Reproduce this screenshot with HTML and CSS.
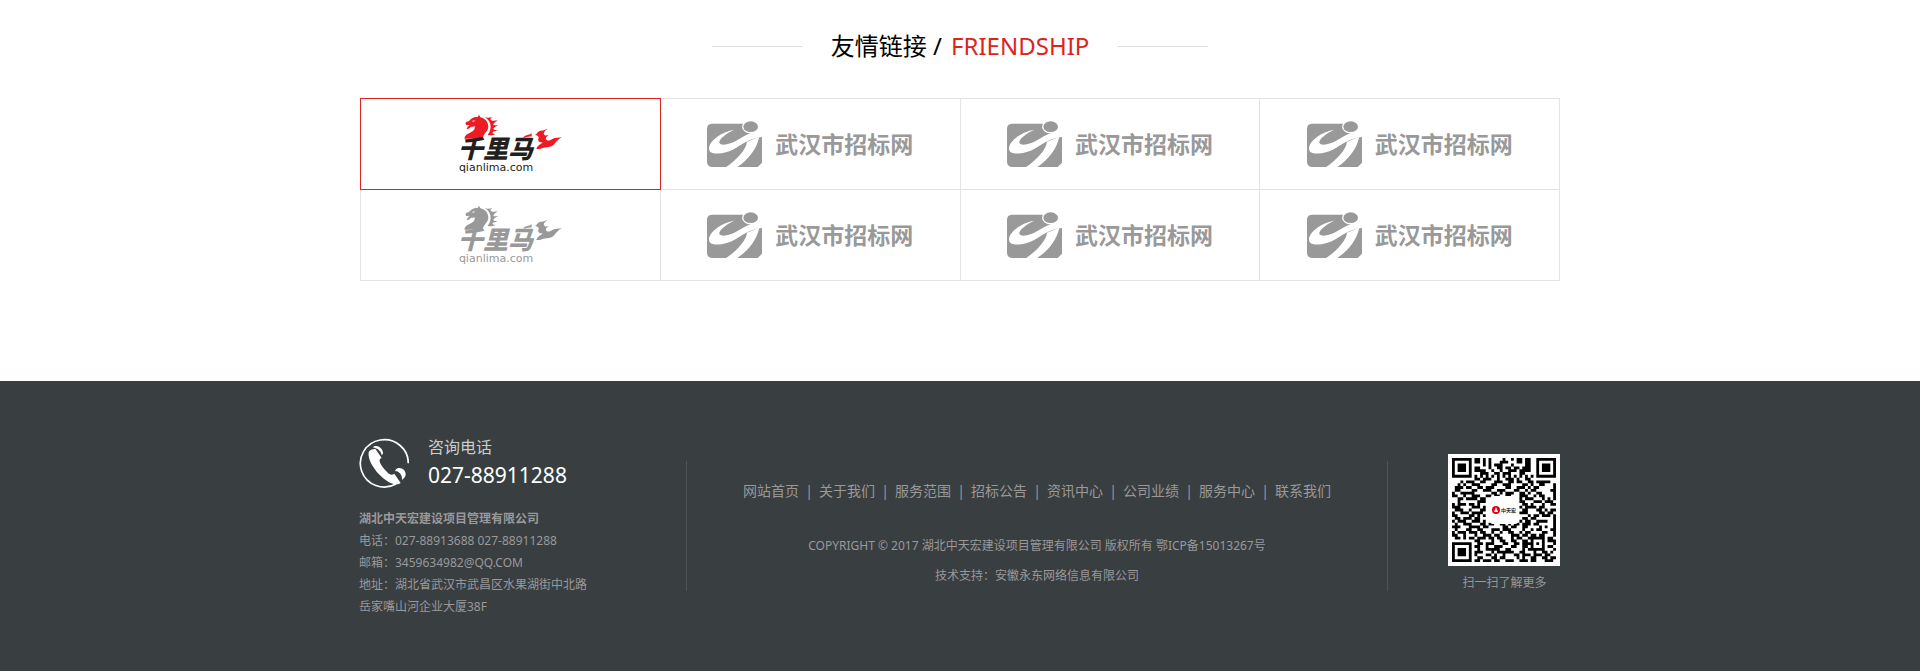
FILE: index.html
```html
<!DOCTYPE html>
<html lang="zh-CN">
<head>
    <meta charset="UTF-8">
    <meta name="viewport" content="width=device-width, initial-scale=1.0">
    <title>湖北中天宏建设项目管理有限公司</title>
    <link rel="stylesheet" href="styles.css">
</head>
<body>
    <!-- shared logo shapes -->
    <svg class="sprite" aria-hidden="true">
        <symbol id="horse" viewBox="325 75 315 180">
            <path d="M344 149C345 139 352 135 361 131C371 126 377 121 375 111C370 115 365 111 362 115C360 119 356 118 355 121L351 119L354 113L360 109L350 108L347 104L350 98L357 97L364 90C370 85 378 84 384 84L388 77L392 85C407 88 416 99 416 114C415 129 400 134 399 149Z"/>
            <path d="M405 84C412 88 419 86 428 85C423 89 421 90 423 92C430 98 437 94 444 95C436 98 431 103 431 108C436 110 441 108 446 109C436 113 431 117 431 121C436 124 440 122 444 123C438 127 430 127 428 131C430 134 434 134 438 134C431 139 421 140 414 138C422 128 425 114 421 103C418 94 413 89 405 84Z"/>
            <path d="M521 147C525 135 537 141 546 132C547 138 543 139 549 142C539 143 531 143 521 147Z"/>
            <path d="M553 137C563 138 561 127 573 125C584 124 587 121 594 119C584 127 579 132 585 138C588 141 592 139 597 139C588 144 586 149 591 153C597 157 603 153 608 150C617 145 627 147 637 145C626 150 621 157 615 164C604 178 585 172 573 179C569 180 566 180 560 180C563 169 575 165 580 160C567 162 563 153 567 147C569 142 563 138 553 137Z"/>
            <path class="horse-eye" d="M366 97L375 93L373 98Z"/>
        </symbol>
        <symbol id="runner" viewBox="54 32 165 138">
            <path d="M54 54Q55 41 68 40H163C164 60 178 70 195 70L219 78V157L206 170H68Q55 168 54 155Z"/>
            <path class="cut" d="M136 58C101 63 59 91 60 116C62 139 112 130 142 112C165 98 188 82 222 80V70L188 68C166 73 149 91 124 99C108 105 88 105 91 94C94 82 116 67 136 58Z"/>
            <path class="cut" d="M174 94C172 117 143 149 110 171H143C177 149 203 117 211 79Z"/>
            <ellipse class="head" cx="185" cy="49" rx="24" ry="18"/>
        </symbol>
    </svg>

    <section class="friendship">
        <h2 class="title">
            <span>友情链接 / <em>FRIENDSHIP</em></span>
        </h2>
        <ul class="links">
            <li class="active">
                <a href="#" class="qlm"><svg class="qlm-art"><use href="#horse"/></svg><b>千里马</b><small>qianlima.com</small></a>
            </li>
            <li><a href="#" class="whzb"><svg><use href="#runner"/></svg>武汉市招标网</a></li>
            <li><a href="#" class="whzb"><svg><use href="#runner"/></svg>武汉市招标网</a></li>
            <li><a href="#" class="whzb"><svg><use href="#runner"/></svg>武汉市招标网</a></li>
            <li>
                <a href="#" class="qlm"><svg class="qlm-art"><use href="#horse"/></svg><b>千里马</b><small>qianlima.com</small></a>
            </li>
            <li><a href="#" class="whzb"><svg><use href="#runner"/></svg>武汉市招标网</a></li>
            <li><a href="#" class="whzb"><svg><use href="#runner"/></svg>武汉市招标网</a></li>
            <li><a href="#" class="whzb"><svg><use href="#runner"/></svg>武汉市招标网</a></li>
        </ul>
    </section>

    <footer class="footer">
        <div class="footer-inner">
            <div class="contact">
                <div class="hotline">
                    <svg class="phone" viewBox="28 42 150 150">
                        <path class="ring" d="M176 118A72 71 0 1 0 139 180"/>
                        <path d="M57 84C54 105 69 130 88 151C105 168 122 180 138 181C144 182 149 180 153 177L134 149C126 155 120 152 112 144C103 134 93 123 90 113C89 107 91 104 96 102L77 74C67 75 60 78 57 84Z"/>
                        <path d="M69 70C75 64 86 66 92 71C98 76 100 82 100 89L96 94C95 84 86 73 69 70ZM139 136C145 129 157 131 163 138C169 145 170 155 164 161L157 168C158 153 150 142 136 141Z"/>
                    </svg>
                    <div>
                        <p class="hotline-label">咨询电话</p>
                        <p class="hotline-number">027-88911288</p>
                    </div>
                </div>
                <address>
                    <strong>湖北中天宏建设项目管理有限公司</strong><br>
                    电话：027-88913688 027-88911288<br>
                    邮箱：3459634982@QQ.COM<br>
                    地址：湖北省武汉市武昌区水果湖街中北路<br>
                    岳家嘴山河企业大厦38F
                </address>
            </div>

            <div class="middle">
                <nav>
                    <a href="#">网站首页</a>
                    <a href="#">关于我们</a>
                    <a href="#">服务范围</a>
                    <a href="#">招标公告</a>
                    <a href="#">资讯中心</a>
                    <a href="#">公司业绩</a>
                    <a href="#">服务中心</a>
                    <a href="#">联系我们</a>
                </nav>
                <p>COPYRIGHT © 2017 湖北中天宏建设项目管理有限公司 版权所有 鄂ICP备15013267号</p>
                <p>技术支持：安徽永东网络信息有限公司</p>
            </div>

            <div class="qrcode">
                <svg viewBox="0 0 112 112" role="img" aria-label="二维码">
                    <rect class="qr-bg" width="112" height="112"/>
                    <path id="qr-modules" transform="translate(4 4) scale(2.81)"/>
                    <rect class="qr-bg" x="42" y="42" width="28" height="28" rx="3"/>
                    <circle class="qr-mark" cx="48" cy="56" r="4"/>
                    <path class="qr-bg" d="M48 53L50 58H46Z"/>
                    <text x="53" y="58">中天宏</text>
                </svg>
                <p>扫一扫了解更多</p>
            </div>
        </div>
    </footer>

    <script>
        const rows = [
            '1111111011010100001001011011001111111',
            '1000001011010100011100011011001000001',
            '1011101000010101110001000011001011101',
            '1011101011000100110110110111001011101',
            '1011101011110010010011101111001011101',
            '1000001000111001101110001100001000001',
            '1111111010101010101010101010101111111',
            '0000000011011100100111010011000000000',
            '0001011100110001110011011001101111100',
            '0010100111000011001110000110100110001',
            '0111011001101110000110011101011000001',
            '0110000110011100111000110010110000011',
            '1001111100000011010111001101001100001',
            '1100100111001101100110001110010110001',
            '0011011110110000000000001011100010101',
            '0010000001110000000000001100011101110',
            '1011101101000000000000000110100010011',
            '1110000111010000000000001011110110000',
            '0111001000110000000000000110001101011',
            '1001110111100000000000001110000110110',
            '1100001101010000000000000001011011101',
            '0110111011000000000000000110110000001',
            '1011100111010000000000001011001111001',
            '0100111000110110011010110111011000001',
            '1110001111011000001101100110000101001',
            '0100011001100011101110000100101100011',
            '1011101110110010010011001011000011001',
            '1100100010011101100001110110110110001',
            '0110101101110110110001011001111110110',
            '0000000011000010011001100110100010111',
            '1111111001101110001100110111101010001',
            '1000001011001001110001100110100010110',
            '1011101001001111100110000101111110001',
            '1011101011100010111111001100010011010',
            '1011101010001101001000110111011101100',
            '1000001001100011011000010100110011011',
            '1111111011011101100111001110110001110'
        ];
        let d = '';
        rows.forEach((row, y) => {
            [...row].forEach((cell, x) => {
                if (cell === '1') d += `M${x} ${y}h1v1h-1z`;
            });
        });
        document.getElementById('qr-modules').setAttribute('d', d);
    </script>
</body>
</html>
```

FILE: styles.css
```css
* {
    box-sizing: border-box;
}

body {
    margin: 0;
    background: #fff;
    color: #000;
    font-family: "Noto Sans", "Noto Sans CJK SC", sans-serif;
}

h2, p, ul {
    margin: 0;
    padding: 0;
}

a {
    color: inherit;
    text-decoration: none;
}

.sprite {
    display: none;
}

/* friendship links */
.friendship {
    max-width: 1200px;
    margin: 0 auto;
    padding: 28px 0 100px;
}

.title {
    display: flex;
    align-items: center;
    justify-content: center;
    gap: 29px;
    font-size: 24px;
    font-weight: normal;
    line-height: 36px;
}

.title::before,
.title::after {
    content: "";
    width: 90px;
    height: 1px;
    background: #ddd;
}

.title em {
    margin-left: 3px;
    color: #dc241d;
    font-style: normal;
}

.links {
    display: grid;
    grid-template-columns: repeat(4, 1fr);
    margin-top: 34px;
    border-top: 1px solid #e3e3e3;
    border-left: 1px solid #e3e3e3;
    list-style: none;
}

.links li {
    display: flex;
    align-items: center;
    justify-content: center;
    height: 91px;
    border-right: 1px solid #e3e3e3;
    border-bottom: 1px solid #e3e3e3;
    color: #999;
}

.links .active {
    height: 92px;
    margin: -1px 0 0 -1px;
    border: 1px solid #dc241d;
    color: #231f20;
}

.links svg {
    fill: #999;
}

.links .active svg {
    fill: #ed1c24;
}

.horse-eye,
.cut {
    fill: #fff;
}

.head {
    stroke: #fff;
    stroke-width: 4;
}

.whzb {
    display: flex;
    align-items: center;
    gap: 13px;
    font-size: 23px;
    font-weight: bold;
    line-height: 44px;
}

.whzb svg {
    width: 55px;
    height: 46px;
}

.qlm {
    display: grid;
    width: 105px;
    height: 60px;
    grid-template-rows: 24px 23px 13px;
}

.qlm-art {
    grid-area: 1 / 1 / 4 / 2;
    width: 105px;
    height: 60px;
}

.qlm b {
    grid-area: 2 / 1;
    font-family: "Liberation Sans", "Noto Sans CJK SC", sans-serif;
    font-size: 25px;
    font-style: italic;
    font-weight: 900;
    line-height: 23px;
}

.qlm small {
    grid-area: 3 / 1;
    padding-left: 1px;
    font-family: "DejaVu Sans", sans-serif;
    font-size: 11px;
    line-height: 13px;
}

/* footer */
.footer {
    padding: 56px 0 56px;
    background: #393e41;
    color: #999;
    font-size: 12px;
}

.footer-inner {
    display: flex;
    align-items: center;
    max-width: 1202px;
    margin: 0 auto;
}

.contact {
    width: 327px;
}

.hotline {
    display: flex;
    gap: 19px;
    margin-bottom: 15px;
}

.phone {
    width: 50px;
    height: 50px;
    margin-top: 1px;
    fill: #fff;
}

.ring {
    fill: none;
    stroke: #fff;
    stroke-width: 5;
}

.hotline-label {
    color: #ccc;
    font-size: 16px;
    line-height: 20px;
}

.hotline-number {
    color: #fff;
    font-size: 21px;
    line-height: 36px;
}

address {
    font-style: normal;
    line-height: 22px;
}

.middle {
    flex: 1;
    height: 130px;
    margin-bottom: 4px;
    padding-top: 15px;
    border-left: 1px solid #4f5356;
    border-right: 1px solid #4f5356;
    text-align: center;
}

nav {
    display: flex;
    justify-content: center;
    margin-bottom: 25px;
    font-size: 14px;
    line-height: 30px;
}

nav a + a::before {
    content: "|";
    display: inline-block;
    width: 20px;
}

.middle p {
    line-height: 30px;
}

.qrcode {
    width: 173px;
    padding: 0 0 8px 60px;
    text-align: center;
}

.qrcode svg {
    display: block;
    width: 112px;
    height: 112px;
}

.qrcode p {
    margin-top: 6px;
    line-height: 22px;
}

.qr-bg {
    fill: #fff;
}

.qr-mark {
    fill: #e60012;
}

.qrcode text {
    fill: #222;
    font-size: 5px;
    font-weight: bold;
}
```
